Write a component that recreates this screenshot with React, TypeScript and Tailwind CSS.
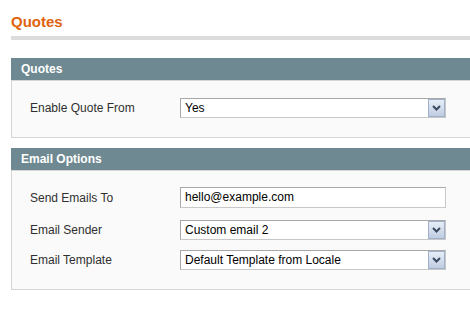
import React from "react";

function Chevron() {
  return (
    <div className="flex h-full w-[17px] shrink-0 items-center justify-center border border-[#9fb0c8] bg-linear-to-b from-[#e6edf7] to-[#bfcde2]">
      <svg width="9" height="6" viewBox="0 0 9 6">
        <path d="M1 1 L4.5 4.5 L8 1" fill="none" stroke="#3b4a60" strokeWidth="2" />
      </svg>
    </div>
  );
}

function Select({ value }: { value: string }) {
  return (
    <div className="flex h-[20px] w-[266px] items-stretch border border-t-[#a8a8a8] border-l-[#a8a8a8] border-r-[#c8c8c8] border-b-[#c8c8c8] bg-white">
      <div className="flex-1 pl-[4px] text-[12px] leading-[18px] text-black">{value}</div>
      <Chevron />
    </div>
  );
}

function TextInput({ value }: { value: string }) {
  return (
    <div className="h-[21px] w-[266px] border border-t-[#a8a8a8] border-l-[#a8a8a8] border-r-[#c8c8c8] border-b-[#c8c8c8] bg-white pl-[4px] text-[12px] leading-[19px] text-black">
      {value}
    </div>
  );
}

function Row({ label, children, className = "" }: { label: string; children: React.ReactNode; className?: string }) {
  return (
    <div className={`flex items-center ${className}`}>
      <div className="w-[150px] text-[12px] leading-[20px] text-[#2f2f2f]">{label}</div>
      {children}
    </div>
  );
}

function Section({ title, children, className = "" }: { title: string; children: React.ReactNode; className?: string }) {
  return (
    <div className={className}>
      <div className="h-[22px] bg-[#6f8992] pl-[10px] text-[12px] font-bold leading-[22px] text-white">{title}</div>
      <div className="border border-[#d6d6d6] bg-[#fafafa] px-[18px] pt-[17px] pb-[19px]">{children}</div>
    </div>
  );
}

export default function App() {
  return (
    <div className="h-[332px] w-[470px] overflow-hidden bg-white font-['Liberation_Sans',Arial,sans-serif]">
      <div className="w-[500px] pl-[11px]">
        <h3 className="pt-[13px] text-[15px] font-bold leading-[18px] text-[#e0620d]">Quotes</h3>
        <div className="mt-[5px] h-[4px] bg-[#dcdcdc]" />
        <Section title="Quotes" className="mt-[18px]">
          <Row label="Enable Quote From">
            <Select value="Yes" />
          </Row>
        </Section>
        <Section title="Email Options" className="mt-[10px]">
          <div className="-mt-px">
            <Row label="Send Emails To">
              <TextInput value="hello@example.com" />
            </Row>
            <Row label="Email Sender" className="mt-[12px]">
              <Select value="Custom email 2" />
            </Row>
            <Row label="Email Template" className="mt-[10px]">
              <Select value="Default Template from Locale" />
            </Row>
          </div>
        </Section>
      </div>
    </div>
  );
}
